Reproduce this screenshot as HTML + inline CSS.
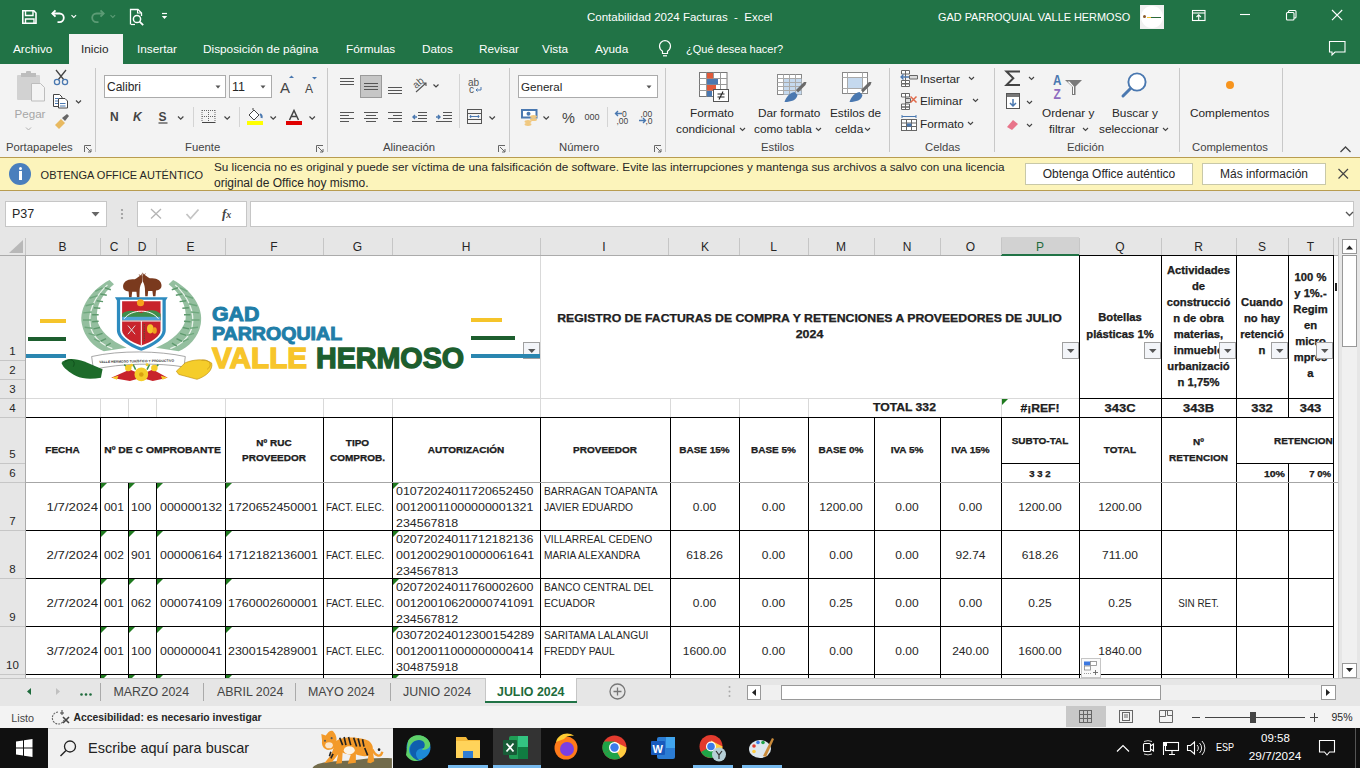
<!DOCTYPE html>
<html><head><meta charset="utf-8">
<style>
*{box-sizing:border-box;margin:0;padding:0}
html,body{width:1360px;height:768px;overflow:hidden;background:#fff}
body{position:relative;font-family:"Liberation Sans",sans-serif;color:#262626}
.a{position:absolute}
.t{position:absolute;white-space:nowrap;line-height:1}
svg{position:absolute;overflow:visible}
.tab{position:absolute;top:44px;font-size:11.8px;color:#fff;white-space:nowrap;line-height:1}
.sep{position:absolute;width:1px;background:#c8c8c8}
.gl{position:absolute;top:142px;font-size:11.3px;color:#444;white-space:nowrap;line-height:1}
.rt{position:absolute;font-size:12px;color:#262626;white-space:nowrap;line-height:1}
</style></head><body>
<!-- TITLE BAR -->
<div class="a" style="left:0;top:0;width:1360px;height:64px;background:#217346"></div>
<svg style="left:0;top:0" width="1360" height="64" fill="none" stroke="#fff" stroke-width="1.6">
 <!-- save -->
 <path d="M22.8 10.8h11l2.2 2.2v10.2h-13.2z" />
 <path d="M25.5 11v4.5h7.5V11" stroke-width="1.4"/>
 <path d="M25.5 23v-4h8.5v4" stroke-width="1.4"/>
 <!-- undo -->
 <path d="M52.5 13.5h7a4.3 4.3 0 0 1 0 8.6h-2" stroke-width="1.8"/>
 <path d="M55.5 10.3l-3.2 3.2 3.2 3.2" stroke-width="1.8"/>
 <path d="M71.5 15.2l2.3 2.3 2.3-2.3" stroke-width="1.1"/>
 <!-- redo faded -->
 <g stroke="#5c9b75">
 <path d="M103.5 13.5h-7a4.3 4.3 0 0 0 0 8.6h2" stroke-width="1.8"/>
 <path d="M100.5 10.3l3.2 3.2-3.2 3.2" stroke-width="1.8"/>
 <path d="M110.5 15.2l2.3 2.3 2.3-2.3" stroke-width="1.1"/>
 </g>
 <!-- print preview -->
 <path d="M130.5 24.5V9.5h7.5l3.5 3.5v3" stroke-width="1.3"/>
 <path d="M137.5 9.5v3.5h4" stroke-width="1.1"/>
 <circle cx="137" cy="19" r="3.6" stroke-width="1.5"/>
 <path d="M139.6 21.6l3.6 3.6" stroke-width="1.8"/>
 <path d="M131 24.5h4" stroke-width="1.2"/>
 <!-- customize -->
 <path d="M162 13.5h5" stroke-width="1.2"/>
 <path d="M161.8 16h5.4l-2.7 3z" fill="#fff" stroke="none"/>
 <!-- ribbon display -->
 <rect x="1192.5" y="10.5" width="12.5" height="10" stroke-width="1.1"/>
 <path d="M1192.5 13h12.5" stroke-width="1.1"/>
 <path d="M1198.7 20.5v-5.5M1196.5 17l2.2-2.2 2.2 2.2" stroke-width="1.1"/>
 <!-- minimize -->
 <path d="M1240 14.5h10" stroke-width="1.1"/>
 <!-- restore -->
 <rect x="1286.5" y="12.5" width="7.5" height="7.5" rx="1" stroke-width="1.1"/>
 <path d="M1288.5 12.5v-1a1 1 0 0 1 1-1h5.5a1 1 0 0 1 1 1v5.5a1 1 0 0 1-1 1h-1" stroke-width="1.1"/>
 <!-- close -->
 <path d="M1332 10l10.2 10.2M1342.2 10l-10.2 10.2" stroke-width="1.1"/>
 <!-- comment -->
 <path d="M1329.5 41.5h15.5v10.5h-10l-3 3v-3h-2.5z" stroke-width="1.1"/>
 <!-- lightbulb -->
 <path d="M662.5 53.5v-2.2c-1.8-1.2-3-3-3-5.2a5.5 5.5 0 0 1 11 0c0 2.2-1.2 4-3 5.2v2.2z" stroke-width="1.2"/>
 <path d="M663 55.8h4" stroke-width="1.2"/>
</svg>
<div class="t" style="left:587px;top:12px;font-size:11.5px;color:#fff">Contabilidad 2024 Facturas&nbsp; -&nbsp; Excel</div>
<div class="t" style="left:938px;top:12px;font-size:10.9px;color:#fff">GAD PARROQUIAL VALLE HERMOSO</div>
<div class="a" style="left:1140px;top:5px;width:24px;height:24px;background:#f0f0f0"></div>
<div class="a" style="left:1141px;top:6px;width:22px;height:22px;background:#fff;border-radius:50%"></div>
<div class="a" style="left:1143px;top:15px;width:3px;height:3px;background:#8a5a2a;border-radius:50%"></div>
<div class="a" style="left:1149px;top:17px;width:12px;height:1px;background:#2c6a3a"></div>
<div class="a" style="left:1147px;top:17px;width:4px;height:1px;background:#f4c430"></div>
<!-- tabs -->
<div class="a" style="left:69px;top:34px;width:54px;height:30px;background:#f3f3f3"></div>
<div class="tab" style="left:13px;">Archivo</div>
<div class="tab" style="left:81px;color:#262626">Inicio</div>
<div class="tab" style="left:137px;">Insertar</div>
<div class="tab" style="left:203px;">Disposición de página</div>
<div class="tab" style="left:346px;">Fórmulas</div>
<div class="tab" style="left:422px;">Datos</div>
<div class="tab" style="left:479px;">Revisar</div>
<div class="tab" style="left:542px;">Vista</div>
<div class="tab" style="left:595px;">Ayuda</div>
<div class="tab" style="left:686px;font-size:11px">¿Qué desea hacer?</div>

<!-- RIBBON -->
<div class="a" style="left:0;top:64px;width:1360px;height:93px;background:#f3f3f3"></div>
<div class="sep" style="left:95px;top:68px;height:84px"></div>
<div class="sep" style="left:327px;top:68px;height:84px"></div>
<div class="sep" style="left:509px;top:68px;height:84px"></div>
<div class="sep" style="left:665px;top:68px;height:84px"></div>
<div class="sep" style="left:889px;top:68px;height:84px"></div>
<div class="sep" style="left:994px;top:68px;height:84px"></div>
<div class="sep" style="left:1179px;top:68px;height:84px"></div>
<div class="sep" style="left:1282px;top:68px;height:84px"></div>
<div class="sep" style="left:193px;top:107px;height:20px;background:#d4d4d4"></div>
<div class="sep" style="left:239px;top:107px;height:20px;background:#d4d4d4"></div>
<div class="sep" style="left:459px;top:74px;height:54px;background:#d4d4d4"></div>
<div class="sep" style="left:607px;top:107px;height:20px;background:#d4d4d4"></div>
<!-- group labels -->
<div class="gl" style="left:6px">Portapapeles</div>
<div class="gl" style="left:185px">Fuente</div>
<div class="gl" style="left:383px">Alineación</div>
<div class="gl" style="left:559px">Número</div>
<div class="gl" style="left:761px">Estilos</div>
<div class="gl" style="left:925px">Celdas</div>
<div class="gl" style="left:1067px">Edición</div>
<div class="gl" style="left:1192px">Complementos</div>
<!-- clipboard text -->
<div class="rt" style="left:14.5px;top:108px;font-size:11.6px;color:#a6a6a6">Pegar</div>
<!-- font boxes -->
<div class="a" style="left:104px;top:75px;width:122px;height:23px;background:#fff;border:1px solid #ababab"></div>
<div class="rt" style="left:107px;top:81px;font-size:12px">Calibri</div>
<div class="a" style="left:229px;top:75px;width:43px;height:23px;background:#fff;border:1px solid #ababab"></div>
<div class="rt" style="left:232px;top:81px;font-size:12.5px">11</div>
<div class="a" style="left:518px;top:75px;width:140px;height:23px;background:#fff;border:1px solid #ababab"></div>
<div class="rt" style="left:521px;top:81px;font-size:11.6px">General</div>
<!-- Estilos text -->
<div class="rt" style="left:690px;top:107.5px;font-size:11.8px">Formato</div>
<div class="rt" style="left:676px;top:123.5px;font-size:11.8px">condicional</div>
<div class="rt" style="left:758px;top:107.5px;font-size:11.8px">Dar formato</div>
<div class="rt" style="left:754px;top:123.5px;font-size:11.8px">como tabla</div>
<div class="rt" style="left:830px;top:107.5px;font-size:11.8px">Estilos de</div>
<div class="rt" style="left:835px;top:123.5px;font-size:11.8px">celda</div>
<div class="rt" style="left:920px;top:74px;font-size:11.8px">Insertar</div>
<div class="rt" style="left:920px;top:96px;font-size:11.8px">Eliminar</div>
<div class="rt" style="left:920px;top:119px;font-size:11.8px">Formato</div>
<div class="rt" style="left:1042px;top:107.5px;font-size:11.8px">Ordenar y</div>
<div class="rt" style="left:1049px;top:123.5px;font-size:11.8px">filtrar</div>
<div class="rt" style="left:1112px;top:107.5px;font-size:11.8px">Buscar y</div>
<div class="rt" style="left:1099px;top:123.5px;font-size:11.8px">seleccionar</div>
<div class="rt" style="left:1190px;top:107.5px;font-size:11.8px">Complementos</div>
<svg style="left:0;top:0" width="1360" height="160" fill="none" stroke="#444" stroke-width="1">
 <!-- paste -->
 <rect x="17" y="75" width="23" height="25" rx="1" fill="#d2d2d2" stroke="none"/>
 <rect x="21" y="73" width="15" height="4" fill="#bdbdbd" stroke="none"/><rect x="26" y="71" width="5" height="3" rx="1" fill="#bdbdbd" stroke="none"/>
 <path d="M31.5 83.5h9l4 4v13.5h-13z" fill="#f4f4f4" stroke="#bdbdbd"/>
 <path d="M26 127.5l2.5 2.5 2.5-2.5" stroke="#b0b0b0"/>
 <!-- scissors -->
 <path d="M56 70l8 10M66 70l-8 10" stroke="#444" stroke-width="1.3"/>
 <circle cx="57" cy="82" r="2.6" stroke="#4a78b0" stroke-width="1.3"/>
 <circle cx="65" cy="82" r="2.6" stroke="#4a78b0" stroke-width="1.3"/>
 <!-- copy -->
 <path d="M53.5 94.5h6l2.5 2.5v9.5h-8.5z" fill="#fff" stroke="#444"/>
 <path d="M58.5 98.5h6.5l2.5 2.5v7h-9z" fill="#fff" stroke="#444"/>
 <path d="M55 98.5h3.5M55 101h3M55 103.5h3M60 103.5h5.5M60 106h5.5" stroke="#4a78b0"/>
 <path d="M76 100.5l2.5 2.5 2.5-2.5" stroke-width="1.2"/>
 <!-- brush -->
 <path d="M55 125l6-6 4 4-6 6z" fill="#e8b960" stroke="none"/>
 <path d="M62 118l5-4 2 2-4 5z" fill="#666" stroke="none"/>
 <!-- launcher icons -->
 <g stroke="#666">
 <path d="M84.5 152v-6.5h6.5M86 147l5 5M91 149v3h-3"/>
 <path d="M316.5 152v-6.5h6.5M318 147l5 5M323 149v3h-3"/>
 <path d="M498.5 152v-6.5h6.5M500 147l5 5M505 149v3h-3"/>
 <path d="M654.5 152v-6.5h6.5M656 147l5 5M661 149v3h-3"/>
 </g>
 <!-- dropdown arrows in boxes -->
 <path d="M215.5 85.5h5l-2.5 3z" fill="#555" stroke="none"/>
 <path d="M260.5 85.5h5l-2.5 3z" fill="#555" stroke="none"/>
 <path d="M646.5 85.5h5l-2.5 3z" fill="#555" stroke="none"/>
 <!-- grow/shrink font -->
 <text x="280" y="93" font-family="Liberation Sans" font-size="15" fill="#444" stroke="none">A</text>
 <path d="M289 78l2.5-2.5 2.5 2.5z" fill="#4a78b0" stroke="none"/>
 <text x="305" y="93" font-family="Liberation Sans" font-size="12" fill="#444" stroke="none">A</text>
 <path d="M312 77h5l-2.5 2.5z" fill="#4a78b0" stroke="none"/>
 <!-- N K S -->
 <text x="110" y="121" font-family="Liberation Sans" font-weight="bold" font-size="12" fill="#444" stroke="none">N</text>
 <text x="133" y="121" font-family="Liberation Sans" font-weight="bold" font-style="italic" font-size="12" fill="#444" stroke="none">K</text>
 <text x="158.5" y="121" font-family="Liberation Sans" font-weight="bold" font-size="12" fill="#444" stroke="none">S</text>
 <path d="M158.5 123h9" stroke-width="1.2"/>
 <path d="M178 116.5l2.7 2.7 2.7-2.7" stroke-width="1.2"/>
 <!-- borders -->
 <path d="M202 110.5h13M202 116.5h13M202 110v12M208.5 110v12M215 110v12" stroke="#666" stroke-dasharray="1 1"/>
 <path d="M202 122.5h13.5" stroke="#444"/>
 <path d="M224.5 116.5l2.7 2.7 2.7-2.7" stroke-width="1.2"/>
 <!-- fill -->
 <rect x="247" y="121" width="16" height="4" fill="#ffff00" stroke="none"/>
 <path d="M249 115l5-5 5 5-5 5z" fill="#fff" stroke="#444"/>
 <path d="M253 110v-2" stroke="#444"/>
 <path d="M260 114c1.5 1 2 2.5 1.5 4" stroke="#4a78b0" stroke-width="2"/>
 <path d="M270.5 116.5l2.7 2.7 2.7-2.7" stroke-width="1.2"/>
 <!-- font color -->
 <rect x="286" y="121" width="16" height="4" fill="#e00000" stroke="none"/>
 <path d="M289.5 120l4.5-9.5 4.5 9.5M291 116.5h6" stroke-width="1.5"/>
 <path d="M309.5 116.5l2.7 2.7 2.7-2.7" stroke-width="1.2"/>
 <!-- alignment top row -->
 <path d="M340 78.5h14M340 81.5h14M340 84.5h14" stroke="#555"/>
 <rect x="360.5" y="75.5" width="21" height="22" fill="#c6c6c6" stroke="#9a9a9a"/>
 <path d="M364 83.5h14M364 86.5h14M364 89.5h14" stroke="#555"/>
 <path d="M388 87.5h14M388 90.5h14M388 93.5h14" stroke="#555"/>
 <text x="412" y="86" font-family="Liberation Sans" font-size="10" fill="#555" stroke="none" transform="rotate(-40 418 82)">ab</text>
 <path d="M416 92l10-9M423 83h3v3" stroke="#555" stroke-width="1.1"/>
 <path d="M433.5 84.5l2.5 2.5 2.5-2.5" stroke-width="1.2"/>
 <text x="468" y="86" font-family="Liberation Sans" font-size="10" fill="#555" stroke="none">ab</text>
 <text x="469" y="93" font-family="Liberation Sans" font-size="10" fill="#555" stroke="none">c</text>
 <path d="M481 87v3h-5M477.5 88.5l-1.5 1.5 1.5 1.5" stroke="#4a78b0"/>
 <!-- alignment bottom row -->
 <path d="M340 112.5h14M340 115.5h9M340 118.5h14M340 121.5h9" stroke="#555"/>
 <path d="M364 112.5h14M366 115.5h10M364 118.5h14M366 121.5h10" stroke="#555"/>
 <path d="M388 112.5h14M393 115.5h9M388 118.5h14M393 121.5h9" stroke="#555"/>
 <path d="M418 112.5h9M418 115.5h9M418 118.5h9M412 121.5h15" stroke="#555"/>
 <path d="M413 117h4M415 115l-2 2 2 2" stroke="#4a78b0" stroke-width="1.4"/>
 <path d="M443 112.5h9M443 115.5h9M443 118.5h9M436 121.5h16" stroke="#555"/>
 <path d="M436 117h4M438 115l2 2-2 2" stroke="#4a78b0" stroke-width="1.4"/>
 <!-- merge -->
 <rect x="467.5" y="109.5" width="14" height="14" stroke="#555"/>
 <path d="M467.5 113.5h14M467.5 119.5h14" stroke="#555"/>
 <path d="M470 116.5h9M471 115l-1 1.5 1 1.5M478 115l1 1.5-1 1.5" stroke="#4a78b0"/>
 <path d="M489.5 116.5l2.7 2.7 2.7-2.7" stroke-width="1.2"/>
 <!-- number -->
 <rect x="522" y="110" width="14.5" height="7.5" fill="#fff" stroke="#4a78b0" stroke-width="2"/>
 <circle cx="528.5" cy="113.8" r="2" fill="#4a78b0" stroke="none"/>
 <ellipse cx="533.5" cy="116.5" rx="3.5" ry="1.6" fill="#f0c880" stroke="none"/>
 <ellipse cx="533.5" cy="119.5" rx="3.5" ry="1.6" fill="#f0c880" stroke="none"/>
 <ellipse cx="528" cy="121.5" rx="3.5" ry="1.6" fill="#f0c880" stroke="none"/>
 <ellipse cx="528" cy="124.3" rx="3.5" ry="1.6" fill="#f0c880" stroke="none"/>
 <path d="M543.5 116.5l2.7 2.7 2.7-2.7" stroke-width="1.2"/>
 <text x="562" y="122.5" font-family="Liberation Sans" font-size="14.5" fill="#444" stroke="none">%</text>
 <text x="584.5" y="120.5" font-family="Liberation Sans" font-size="9.5" fill="#444" stroke="none" transform="translate(584.5 0) scale(0.95 1) translate(-584.5 0)">000</text>
 <text x="622" y="116.5" font-family="Liberation Sans" font-size="8.5" fill="#444" stroke="none">0</text>
 <text x="616.5" y="123.5" font-family="Liberation Sans" font-size="8.5" fill="#444" stroke="none">,00</text>
 <path d="M615.5 113.5h6.5M618 111l-2.5 2.5 2.5 2.5" stroke="#4a78b0" stroke-width="1.4"/>
 <text x="640.5" y="116.5" font-family="Liberation Sans" font-size="8.5" fill="#444" stroke="none">,00</text>
 <text x="645.5" y="123.5" font-family="Liberation Sans" font-size="8.5" fill="#444" stroke="none">,0</text>
 <path d="M639 120.5h6.5M643 118l2.5 2.5-2.5 2.5" stroke="#4a78b0" stroke-width="1.4"/>
 <!-- conditional format icon -->
 <rect x="699.5" y="72.5" width="27.5" height="24" fill="#fff" stroke="#777"/>
 <path d="M699.5 78.5h27.5M699.5 84.5h27.5M699.5 90.5h27.5M706.5 72.5v24M713.5 72.5v24M720.5 72.5v24" stroke="#999" fill="none"/>
 <rect x="707" y="73" width="6" height="5.5" fill="#e05a3a" stroke="none"/>
 <rect x="707" y="79" width="11" height="5.5" fill="#4a78b0" stroke="none"/>
 <rect x="707" y="85" width="9" height="5.5" fill="#e05a3a" stroke="none"/>
 <rect x="707" y="91" width="5" height="5.5" fill="#4a78b0" stroke="none"/>
 <rect x="713.5" y="89.5" width="15" height="12" fill="#fff" stroke="#555"/>
 <path d="M717.5 94h7M717.5 97h7M719 99.5l4-8" stroke="#222" stroke-width="1.1"/>
 <path d="M740 128l2.5 2.5 2.5-2.5" stroke-width="1.1"/>
 <!-- table format -->
 <rect x="777.5" y="74.5" width="24" height="20" fill="#fff" stroke="#888"/>
 <rect x="784" y="79" width="17.5" height="15.5" fill="#c5d9ee" stroke="none"/>
 <path d="M777.5 78.5h24M777.5 82.5h24M777.5 86.5h24M777.5 90.5h24M783.5 74.5v20M789.5 74.5v20M795.5 74.5v20" stroke="#aaa" fill="none"/>
 <path d="M796 90l8-8 2.5 0 -1 3 -7.5 7.5z" fill="#6a6a6a" stroke="none"/>
 <path d="M784.5 102c1.5-5 5-9 10-10l3 3c-1 5-6 7-13 7z" fill="#4a78b0" stroke="none"/>
 <path d="M816 128l2.5 2.5 2.5-2.5" stroke-width="1.1"/>
 <!-- cell styles -->
 <rect x="842.5" y="72.5" width="25" height="21" fill="#fff" stroke="#888"/>
 <path d="M842.5 77.5h25M842.5 88.5h25M847.5 72.5v21M862.5 72.5v21" stroke="#aaa" fill="none"/>
 <rect x="848" y="78" width="14" height="10" fill="#c5d9ee" stroke="none"/>
 <path d="M861 90l8-8 2.5 0 -1 3 -7.5 7.5z" fill="#6a6a6a" stroke="none"/>
 <path d="M849.5 102c1.5-5 5-9 10-10l3 3c-1 5-6 7-13 7z" fill="#4a78b0" stroke="none"/>
 <path d="M865 128l2.5 2.5 2.5-2.5" stroke-width="1.1"/>
 <!-- cells icons -->
 <g stroke="#666" fill="#fff">
 <path d="M901.5 70.5h8v3.5h-8zM901.5 80.5h8v3h-8zM901.5 84h8v2.5h-8z"/>
 <path d="M905.5 70.5v16"/>
 <path d="M909.5 75.5h8v3.5h-8z" fill="#ddd"/>
 <path d="M901.5 93.5h8v3.5h-8zM901.5 104h8v3h-8zM901.5 107h8v2.5h-8z"/>
 <path d="M905.5 93.5v16"/>
 <path d="M905.5 98.5h5v4h-5z" fill="#ddd"/>
 <rect x="901.5" y="119.5" width="15" height="11"/>
 <path d="M901.5 123h15M901.5 126.5h15M906.5 119.5v11M911.5 119.5v11"/>
 </g>
 <path d="M909 77h-8M903.5 74.5l-2.5 2.5 2.5 2.5" stroke="#4a78b0" stroke-width="1.3" fill="none"/>
 <path d="M910.5 96.5l6 6M916.5 96.5l-6 6" stroke="#e06a4a" stroke-width="1.5"/>
 <rect x="907" y="123.5" width="4.5" height="3" fill="#4a78b0" stroke="none"/>
 <path d="M902 116.5h14M902 115v3M916 115v3" stroke="#4a78b0" stroke-width="1"/>
 <path d="M969 77l2.5 2.5 2.5-2.5" stroke-width="1.1"/>
 <path d="M973 99l2.5 2.5 2.5-2.5" stroke-width="1.1"/>
 <path d="M968 122l2.5 2.5 2.5-2.5" stroke-width="1.1"/>
 <!-- edit icons -->
 <path d="M1020 71.5h-13.5l6.8 6.8-6.8 6.8h13.5" stroke="#444" stroke-width="2"/>
 <path d="M1029 77l2.5 2.5 2.5-2.5" stroke-width="1.1"/>
 <rect x="1006.5" y="93.5" width="13" height="15" fill="#fff" stroke="#555"/>
 <rect x="1007" y="94" width="12" height="3" fill="#777" stroke="none"/>
 <path d="M1013 99v7M1010 103l3 3 3-3" stroke="#4a78b0" stroke-width="1.5"/>
 <path d="M1027 101l2.5 2.5 2.5-2.5" stroke-width="1.1"/>
 <path d="M1007 127l6-7 5 4-6 6z" fill="#e8748a" stroke="none"/>
 <path d="M1027 124l2.5 2.5 2.5-2.5" stroke-width="1.1"/>
 <!-- sort -->
 <text x="1053" y="85" font-family="Liberation Sans" font-weight="bold" font-size="15" fill="#4a78b0" stroke="none" transform="translate(1053 0) scale(0.78 1) translate(-1053 0)">A</text>
 <text x="1053.5" y="99" font-family="Liberation Sans" font-weight="bold" font-size="15" fill="#8e6bbf" stroke="none" transform="translate(1053.5 0) scale(0.8 1) translate(-1053.5 0)">Z</text>
 <path d="M1065 80h17l-6.5 6.5v8.5h-3.5v-8.5z" fill="#7a7a7a" stroke="none"/>
 <path d="M1067.5 81.5l5.5 5.5v7h1v-7.5l-4.5-5z" fill="#fff" stroke="none"/>
 <path d="M1083 128l2.5 2.5 2.5-2.5" stroke-width="1.1"/>
 <!-- find -->
 <circle cx="1137" cy="82" r="8.6" stroke="#4a78b0" stroke-width="1.9" fill="#fff"/>
 <path d="M1130.5 88.5l-7.5 7.5" stroke="#4a78b0" stroke-width="3" stroke-linecap="round"/>
 <path d="M1163 128l2.5 2.5 2.5-2.5" stroke-width="1.1"/>
 <!-- addins dot -->
 <circle cx="1230" cy="85" r="4" fill="#f7941d" stroke="none"/>
 <!-- collapse -->
 <path d="M1340.5 152l5-5 5 5" stroke="#444" stroke-width="1.3"/>
</svg>

<!-- YELLOW BAR -->
<div class="a" style="left:0;top:157px;width:1360px;height:34px;background:#fcf4bb;border-top:1px solid #b89c50;border-bottom:1px solid #b89c50"></div>
<div class="a" style="left:9px;top:163px;width:22px;height:22px;border-radius:50%;background:#4a7fbd"></div>
<div class="a" style="left:18.5px;top:167px;width:3px;height:3px;background:#fff;border-radius:50%"></div>
<div class="a" style="left:18.5px;top:171px;width:3px;height:9px;background:#fff"></div>
<div class="t" style="left:40.6px;top:169.7px;font-size:11px;color:#262626">OBTENGA OFFICE AUTÉNTICO</div>
<div class="t" style="left:214px;top:161px;font-size:11.74px;color:#262626">Su licencia no es original y puede ser víctima de una falsificación de software. Evite las interrupciones y mantenga sus archivos a salvo con una licencia</div>
<div class="t" style="left:214px;top:177px;font-size:12px;color:#262626">original de Office hoy mismo.</div>
<div class="a" style="left:1025px;top:163px;width:168px;height:22px;background:#fff;border:1px solid #c8c8a8"></div>
<div class="t" style="left:1025px;top:168px;width:168px;text-align:center;font-size:12px;color:#262626">Obtenga Office auténtico</div>
<div class="a" style="left:1202px;top:163px;width:124px;height:22px;background:#fff;border:1px solid #c8c8a8"></div>
<div class="t" style="left:1202px;top:168px;width:124px;text-align:center;font-size:12px;color:#262626">Más información</div>
<svg style="left:0;top:0" width="1360" height="200"><path d="M1338.5 169l9.5 9.5M1348 169l-9.5 9.5" stroke="#444" stroke-width="1.2"/></svg>
<!-- FORMULA BAR -->
<div class="a" style="left:0;top:191px;width:1360px;height:65px;background:#e6e6e6"></div>
<div class="a" style="left:5px;top:201px;width:102px;height:26px;background:#fff;border:1px solid #c6c6c6"></div>
<div class="t" style="left:12px;top:207.5px;font-size:12.5px;color:#262626">P37</div>

<div class="a" style="left:137px;top:201px;width:110px;height:26px;background:#fff;border:1px solid #c6c6c6"></div>
<div class="t" style="left:222px;top:207px;font-size:13px;font-family:'Liberation Serif',serif;font-style:italic;font-weight:bold;color:#444">f<span style="font-size:10px">x</span></div>
<div class="a" style="left:250px;top:201px;width:1104px;height:26px;background:#fff;border:1px solid #c6c6c6"></div>
<svg style="left:0;top:0" width="1360" height="260">
 <path d="M91.5 212h8l-4 4.5z" fill="#666"/>
 <circle cx="122" cy="210" r="1.1" fill="#999"/><circle cx="122" cy="214" r="1.1" fill="#999"/><circle cx="122" cy="218" r="1.1" fill="#999"/>
 <path d="M151 209l10 9.5M161 209l-10 9.5" stroke="#b4b4b4" stroke-width="1.3" fill="none"/>
 <path d="M186.5 214l4 4.5 8-9" stroke="#c4c4c4" stroke-width="1.8" fill="none"/>
 <path d="M1346 212l3.5 3.5 3.5-3.5" stroke="#555" stroke-width="1.3" fill="none"/>
</svg>
<!-- COLUMN HEADERS -->
<div class="a" style="left:0;top:237px;width:1338px;height:19px;background:#e6e6e6;border-bottom:1px solid #ababab"></div>
<svg style="left:0;top:0" width="30" height="260"><path d="M9 253h14v-13z" fill="#b8b8b8"/></svg>
<div class="a" style="left:1001px;top:237px;width:78px;height:18px;background:#d2d2d2"></div>
<div class="a" style="left:1001px;top:254px;width:78px;height:2px;background:#217346"></div>

<div class="a" style="left:100px;top:238px;width:1px;height:17px;background:#c6c6c6"></div>
<div class="t" style="left:25px;top:241px;width:75px;text-align:center;font-size:12px;color:#262626">B</div>
<div class="a" style="left:128px;top:238px;width:1px;height:17px;background:#c6c6c6"></div>
<div class="t" style="left:100px;top:241px;width:28px;text-align:center;font-size:12px;color:#262626">C</div>
<div class="a" style="left:156px;top:238px;width:1px;height:17px;background:#c6c6c6"></div>
<div class="t" style="left:128px;top:241px;width:28px;text-align:center;font-size:12px;color:#262626">D</div>
<div class="a" style="left:225px;top:238px;width:1px;height:17px;background:#c6c6c6"></div>
<div class="t" style="left:156px;top:241px;width:69px;text-align:center;font-size:12px;color:#262626">E</div>
<div class="a" style="left:323px;top:238px;width:1px;height:17px;background:#c6c6c6"></div>
<div class="t" style="left:225px;top:241px;width:98px;text-align:center;font-size:12px;color:#262626">F</div>
<div class="a" style="left:392px;top:238px;width:1px;height:17px;background:#c6c6c6"></div>
<div class="t" style="left:323px;top:241px;width:69px;text-align:center;font-size:12px;color:#262626">G</div>
<div class="a" style="left:540px;top:238px;width:1px;height:17px;background:#c6c6c6"></div>
<div class="t" style="left:392px;top:241px;width:148px;text-align:center;font-size:12px;color:#262626">H</div>
<div class="a" style="left:668px;top:238px;width:1px;height:17px;background:#c6c6c6"></div>
<div class="t" style="left:540px;top:241px;width:128px;text-align:center;font-size:12px;color:#262626">I</div>
<div class="a" style="left:739px;top:238px;width:1px;height:17px;background:#c6c6c6"></div>
<div class="t" style="left:671px;top:241px;width:68px;text-align:center;font-size:12px;color:#262626">K</div>
<div class="a" style="left:808px;top:238px;width:1px;height:17px;background:#c6c6c6"></div>
<div class="t" style="left:739px;top:241px;width:69px;text-align:center;font-size:12px;color:#262626">L</div>
<div class="a" style="left:874px;top:238px;width:1px;height:17px;background:#c6c6c6"></div>
<div class="t" style="left:808px;top:241px;width:66px;text-align:center;font-size:12px;color:#262626">M</div>
<div class="a" style="left:940px;top:238px;width:1px;height:17px;background:#c6c6c6"></div>
<div class="t" style="left:874px;top:241px;width:66px;text-align:center;font-size:12px;color:#262626">N</div>
<div class="a" style="left:1001px;top:238px;width:1px;height:17px;background:#c6c6c6"></div>
<div class="t" style="left:940px;top:241px;width:61px;text-align:center;font-size:12px;color:#262626">O</div>
<div class="a" style="left:1079px;top:238px;width:1px;height:17px;background:#c6c6c6"></div>
<div class="t" style="left:1001px;top:241px;width:78px;text-align:center;font-size:12px;color:#1e6b3c">P</div>
<div class="a" style="left:1161px;top:238px;width:1px;height:17px;background:#c6c6c6"></div>
<div class="t" style="left:1079px;top:241px;width:82px;text-align:center;font-size:12px;color:#262626">Q</div>
<div class="a" style="left:1236px;top:238px;width:1px;height:17px;background:#c6c6c6"></div>
<div class="t" style="left:1161px;top:241px;width:75px;text-align:center;font-size:12px;color:#262626">R</div>
<div class="a" style="left:1288px;top:238px;width:1px;height:17px;background:#c6c6c6"></div>
<div class="t" style="left:1236px;top:241px;width:52px;text-align:center;font-size:12px;color:#262626">S</div>
<div class="a" style="left:1333px;top:238px;width:1px;height:17px;background:#c6c6c6"></div>
<div class="t" style="left:1288px;top:241px;width:45px;text-align:center;font-size:12px;color:#262626">T</div>
<div class="a" style="left:668px;top:238px;width:1px;height:17px;background:#c6c6c6"></div>
<div class="a" style="left:25px;top:238px;width:1px;height:17px;background:#c6c6c6"></div>
<div class="a" style="left:0;top:256px;width:25px;height:422px;background:#e6e6e6"></div>
<div class="a" style="left:25px;top:256px;width:1px;height:422px;background:#ababab"></div>
<div class="a" style="left:0;top:360px;width:25px;height:1px;background:#c6c6c6"></div>
<div class="t" style="left:0;top:346.3px;width:25px;text-align:center;font-size:11.5px;color:#262626">1</div>
<div class="a" style="left:0;top:379px;width:25px;height:1px;background:#c6c6c6"></div>
<div class="t" style="left:0;top:365.3px;width:25px;text-align:center;font-size:11.5px;color:#262626">2</div>
<div class="a" style="left:0;top:398px;width:25px;height:1px;background:#c6c6c6"></div>
<div class="t" style="left:0;top:384.3px;width:25px;text-align:center;font-size:11.5px;color:#262626">3</div>
<div class="a" style="left:0;top:417px;width:25px;height:1px;background:#c6c6c6"></div>
<div class="t" style="left:0;top:403.3px;width:25px;text-align:center;font-size:11.5px;color:#262626">4</div>
<div class="a" style="left:0;top:463px;width:25px;height:1px;background:#c6c6c6"></div>
<div class="t" style="left:0;top:449.3px;width:25px;text-align:center;font-size:11.5px;color:#262626">5</div>
<div class="a" style="left:0;top:482px;width:25px;height:1px;background:#c6c6c6"></div>
<div class="t" style="left:0;top:468.3px;width:25px;text-align:center;font-size:11.5px;color:#262626">6</div>
<div class="a" style="left:0;top:530px;width:25px;height:1px;background:#c6c6c6"></div>
<div class="t" style="left:0;top:516.3px;width:25px;text-align:center;font-size:11.5px;color:#262626">7</div>
<div class="a" style="left:0;top:578px;width:25px;height:1px;background:#c6c6c6"></div>
<div class="t" style="left:0;top:564.3px;width:25px;text-align:center;font-size:11.5px;color:#262626">8</div>
<div class="a" style="left:0;top:626px;width:25px;height:1px;background:#c6c6c6"></div>
<div class="t" style="left:0;top:612.3px;width:25px;text-align:center;font-size:11.5px;color:#262626">9</div>
<div class="a" style="left:0;top:674px;width:25px;height:1px;background:#c6c6c6"></div>
<div class="t" style="left:0;top:660.3px;width:25px;text-align:center;font-size:11.5px;color:#262626">10</div>
<div class="a" style="left:26px;top:256px;width:1312px;height:422px;background:#fff"></div>
<div class="a" style="left:26px;top:398px;width:1053px;height:1px;background:#d9d9d9"></div>
<div class="a" style="left:100px;top:399px;width:1px;height:18px;background:#d9d9d9"></div>
<div class="a" style="left:128px;top:399px;width:1px;height:18px;background:#d9d9d9"></div>
<div class="a" style="left:156px;top:399px;width:1px;height:18px;background:#d9d9d9"></div>
<div class="a" style="left:225px;top:399px;width:1px;height:18px;background:#d9d9d9"></div>
<div class="a" style="left:323px;top:399px;width:1px;height:18px;background:#d9d9d9"></div>
<div class="a" style="left:392px;top:399px;width:1px;height:18px;background:#d9d9d9"></div>
<div class="a" style="left:540px;top:399px;width:1px;height:18px;background:#d9d9d9"></div>
<div class="a" style="left:670px;top:399px;width:1px;height:18px;background:#d9d9d9"></div>
<div class="a" style="left:739px;top:399px;width:1px;height:18px;background:#d9d9d9"></div>
<div class="a" style="left:808px;top:399px;width:1px;height:18px;background:#d9d9d9"></div>
<div class="a" style="left:1001px;top:399px;width:1px;height:18px;background:#d9d9d9"></div>
<div class="a" style="left:540px;top:256px;width:1px;height:142px;background:#d9d9d9"></div>
<div class="a" style="left:1079px;top:256px;width:1px;height:419px;background:#000"></div>
<div class="a" style="left:1161px;top:256px;width:1px;height:419px;background:#000"></div>
<div class="a" style="left:1236px;top:256px;width:1px;height:419px;background:#000"></div>
<div class="a" style="left:1288px;top:256px;width:1px;height:419px;background:#000"></div>
<div class="a" style="left:1333px;top:256px;width:1px;height:419px;background:#000"></div>
<div class="a" style="left:1079px;top:398px;width:255px;height:1px;background:#000"></div>
<div class="a" style="left:1079px;top:255px;width:255px;height:1px;background:#000"></div>
<div class="a" style="left:26px;top:417px;width:1308px;height:1px;background:#000"></div>
<div class="a" style="left:100px;top:417px;width:1px;height:258px;background:#000"></div>
<div class="a" style="left:225px;top:417px;width:1px;height:258px;background:#000"></div>
<div class="a" style="left:323px;top:417px;width:1px;height:258px;background:#000"></div>
<div class="a" style="left:392px;top:417px;width:1px;height:258px;background:#000"></div>
<div class="a" style="left:540px;top:417px;width:1px;height:258px;background:#000"></div>
<div class="a" style="left:670px;top:417px;width:1px;height:258px;background:#000"></div>
<div class="a" style="left:739px;top:417px;width:1px;height:258px;background:#000"></div>
<div class="a" style="left:808px;top:417px;width:1px;height:258px;background:#000"></div>
<div class="a" style="left:874px;top:417px;width:1px;height:258px;background:#000"></div>
<div class="a" style="left:940px;top:417px;width:1px;height:258px;background:#000"></div>
<div class="a" style="left:1001px;top:417px;width:1px;height:258px;background:#000"></div>
<div class="a" style="left:1001px;top:463px;width:78px;height:1px;background:#000"></div>
<div class="a" style="left:1236px;top:463px;width:98px;height:1px;background:#000"></div>
<div class="a" style="left:128px;top:482px;width:1px;height:196px;background:#000"></div>
<div class="a" style="left:156px;top:482px;width:1px;height:196px;background:#000"></div>
<div class="a" style="left:1288px;top:418px;width:1px;height:45px;background:#fff"></div>
<div class="a" style="left:26px;top:482px;width:1312px;height:1px;background:#a6a6a6"></div>
<div class="a" style="left:26px;top:530px;width:1308px;height:1px;background:#000"></div>
<div class="a" style="left:26px;top:578px;width:1308px;height:1px;background:#000"></div>
<div class="a" style="left:26px;top:626px;width:1308px;height:1px;background:#000"></div>
<div class="a" style="left:26px;top:674px;width:1308px;height:1px;background:#000"></div>
<div class="a" style="left:100px;top:675px;width:1px;height:3px;background:#000"></div>
<div class="a" style="left:128px;top:675px;width:1px;height:3px;background:#000"></div>
<div class="a" style="left:156px;top:675px;width:1px;height:3px;background:#000"></div>
<div class="a" style="left:225px;top:675px;width:1px;height:3px;background:#000"></div>
<div class="a" style="left:323px;top:675px;width:1px;height:3px;background:#000"></div>
<div class="a" style="left:392px;top:675px;width:1px;height:3px;background:#000"></div>
<div class="a" style="left:540px;top:675px;width:1px;height:3px;background:#000"></div>
<div class="a" style="left:670px;top:675px;width:1px;height:3px;background:#000"></div>
<div class="a" style="left:739px;top:675px;width:1px;height:3px;background:#000"></div>
<div class="a" style="left:808px;top:675px;width:1px;height:3px;background:#000"></div>
<div class="a" style="left:874px;top:675px;width:1px;height:3px;background:#000"></div>
<div class="a" style="left:940px;top:675px;width:1px;height:3px;background:#000"></div>
<div class="a" style="left:1001px;top:675px;width:1px;height:3px;background:#000"></div>
<div class="a" style="left:1079px;top:675px;width:1px;height:3px;background:#000"></div>
<div class="a" style="left:1161px;top:675px;width:1px;height:3px;background:#000"></div>
<div class="a" style="left:1236px;top:675px;width:1px;height:3px;background:#000"></div>
<div class="a" style="left:1288px;top:675px;width:1px;height:3px;background:#000"></div>
<div class="a" style="left:1333px;top:675px;width:1px;height:3px;background:#000"></div>
<svg style="left:101px;top:483px" width="6" height="6"><path d="M0 0h6L0 6z" fill="#1f7a1f"/></svg>
<svg style="left:129px;top:483px" width="6" height="6"><path d="M0 0h6L0 6z" fill="#1f7a1f"/></svg>
<svg style="left:157px;top:483px" width="6" height="6"><path d="M0 0h6L0 6z" fill="#1f7a1f"/></svg>
<svg style="left:226px;top:483px" width="6" height="6"><path d="M0 0h6L0 6z" fill="#1f7a1f"/></svg>
<svg style="left:393px;top:483px" width="6" height="6"><path d="M0 0h6L0 6z" fill="#1f7a1f"/></svg>
<svg style="left:101px;top:531px" width="6" height="6"><path d="M0 0h6L0 6z" fill="#1f7a1f"/></svg>
<svg style="left:129px;top:531px" width="6" height="6"><path d="M0 0h6L0 6z" fill="#1f7a1f"/></svg>
<svg style="left:157px;top:531px" width="6" height="6"><path d="M0 0h6L0 6z" fill="#1f7a1f"/></svg>
<svg style="left:226px;top:531px" width="6" height="6"><path d="M0 0h6L0 6z" fill="#1f7a1f"/></svg>
<svg style="left:393px;top:531px" width="6" height="6"><path d="M0 0h6L0 6z" fill="#1f7a1f"/></svg>
<svg style="left:101px;top:579px" width="6" height="6"><path d="M0 0h6L0 6z" fill="#1f7a1f"/></svg>
<svg style="left:129px;top:579px" width="6" height="6"><path d="M0 0h6L0 6z" fill="#1f7a1f"/></svg>
<svg style="left:157px;top:579px" width="6" height="6"><path d="M0 0h6L0 6z" fill="#1f7a1f"/></svg>
<svg style="left:226px;top:579px" width="6" height="6"><path d="M0 0h6L0 6z" fill="#1f7a1f"/></svg>
<svg style="left:393px;top:579px" width="6" height="6"><path d="M0 0h6L0 6z" fill="#1f7a1f"/></svg>
<svg style="left:101px;top:627px" width="6" height="6"><path d="M0 0h6L0 6z" fill="#1f7a1f"/></svg>
<svg style="left:129px;top:627px" width="6" height="6"><path d="M0 0h6L0 6z" fill="#1f7a1f"/></svg>
<svg style="left:157px;top:627px" width="6" height="6"><path d="M0 0h6L0 6z" fill="#1f7a1f"/></svg>
<svg style="left:226px;top:627px" width="6" height="6"><path d="M0 0h6L0 6z" fill="#1f7a1f"/></svg>
<svg style="left:393px;top:627px" width="6" height="6"><path d="M0 0h6L0 6z" fill="#1f7a1f"/></svg>
<svg style="left:101px;top:675px" width="6" height="6"><path d="M0 0h6L0 6z" fill="#1f7a1f"/></svg>
<svg style="left:129px;top:675px" width="6" height="6"><path d="M0 0h6L0 6z" fill="#1f7a1f"/></svg>
<svg style="left:157px;top:675px" width="6" height="6"><path d="M0 0h6L0 6z" fill="#1f7a1f"/></svg>
<svg style="left:226px;top:675px" width="6" height="6"><path d="M0 0h6L0 6z" fill="#1f7a1f"/></svg>
<svg style="left:393px;top:675px" width="6" height="6"><path d="M0 0h6L0 6z" fill="#1f7a1f"/></svg>
<svg style="left:1002px;top:399px" width="6" height="6"><path d="M0 0h6L0 6z" fill="#1f7a1f"/></svg>
<div class="a" style="left:1335px;top:283px;width:2px;height:8px;background:#222"></div>
<!-- LOGO -->
<svg style="left:0;top:0" width="560" height="400">
 <rect x="40" y="319" width="26" height="4" fill="#f5c42a"/>
 <rect x="28" y="337" width="38" height="4" fill="#1d5e2e"/>
 <rect x="26" y="354" width="40" height="4" fill="#2a86b0"/>
 <rect x="471" y="318" width="31" height="4" fill="#f5c42a"/>
 <rect x="471" y="336" width="44" height="4" fill="#1d5e2e"/>
 <rect x="471" y="354" width="69" height="4" fill="#2a86b0"/>
 <g transform="translate(55 265) scale(0.16287)">
  <g id="wr">
   <path d="M335 92 C225 150 145 260 165 362 C180 445 240 505 300 530 L440 508 C335 462 270 402 258 332 C248 252 295 172 362 118 Z" fill="#94bf9f"/>
   <path d="M322 122 C242 195 200 290 218 378 C234 444 288 488 352 514" stroke="#e9f3eb" stroke-width="8" fill="none"/>
   <path d="M305 140 l38 12 M278 178 l40 8 M255 220 l40 5 M238 262 l40 3 M228 305 l40 0 M228 348 l40 -3 M236 392 l40 -8 M254 432 l38 -12 M280 468 l34 -16 M312 498 l30 -18" stroke="#5f9a6e" stroke-width="9" fill="none"/>
   <path d="M292 140 l-45 22 M262 188 l-50 16 M240 238 l-52 12 M226 288 l-52 6 M222 338 l-50 0 M230 388 l-48 -6 M248 432 l-42 -12 M275 470 l-35 -16" stroke="#6fa87e" stroke-width="9" fill="none"/>
  </g>
  <use href="#wr" transform="translate(1060 0) scale(-1 1)"/>
  <g id="bull">
   <path d="M418 135 C416 100 450 82 490 88 C505 80 518 70 528 62 L536 72 L534 108 C526 118 522 132 520 150 L518 198 L503 198 L500 165 L474 165 L470 198 L455 198 L452 162 C430 160 419 150 418 135 Z" fill="#7a3a1e"/>
   <path d="M525 70 l-8 -12 M530 68 l4 -14" stroke="#7a3a1e" stroke-width="5"/>
  </g>
  <use href="#bull" transform="translate(1072 -6) scale(-1 1)"/>
  <path d="M368 198 L692 198 L680 218 L680 400 C680 450 610 500 530 527 C450 500 380 450 380 400 L380 218 Z" fill="#2d8bbf"/>
  <path d="M400 214 L660 214 L660 400 C660 440 600 482 530 506 C460 482 400 440 400 400 Z" fill="#fff"/>
  <path d="M412 222 L648 222 L648 400 C648 435 595 472 530 494 C465 472 412 435 412 400 Z" fill="#c8232b"/>
  <circle cx="525" cy="232" r="22" fill="#f7a21b"/>
  <path d="M412 300 C450 268 500 285 530 295 C570 275 615 268 648 300 L648 340 L412 340 Z" fill="#3e8e4a"/>
  <rect x="412" y="318" width="236" height="22" fill="#4fa3d8"/>
  <path d="M425 330 C470 268 590 268 635 330" stroke="#fff" stroke-width="6" fill="none"/>
  <path d="M412 344 H648 M530 344 V494" stroke="#fff" stroke-width="6"/>
  <path d="M448 372 L492 425 M492 372 L448 425" stroke="#ddd" stroke-width="6"/>
  <ellipse cx="585" cy="392" rx="20" ry="28" fill="#f5c42a"/>
  <ellipse cx="612" cy="402" rx="13" ry="20" fill="#f0a020"/>
  <path d="M548 362 V470" stroke="#2f5a2f" stroke-width="5" stroke-dasharray="8 6"/>
  <path d="M225 562 C400 522 640 527 800 562 L792 626 C640 600 400 602 236 642 Z" fill="#fff" stroke="#777" stroke-width="4"/>
  <text x="272" y="598" font-family="Liberation Sans" font-weight="bold" font-size="21" fill="#333" textLength="460" transform="rotate(-1 500 590)">VALLE HERMOSO TURÍSTICO Y PRODUCTIVO</text>
  <path d="M40 602 C60 568 125 572 180 592 L292 640 L282 692 C230 702 170 702 130 682 C90 662 50 632 40 602 Z" fill="#1d6b2a"/>
  <path d="M60 598 C85 565 135 585 112 625" stroke="#0f4a1a" stroke-width="5" fill="none"/>
  <path d="M745 652 L800 600 C850 580 920 572 962 602 C972 642 932 682 872 702 L760 672 Z" fill="#f5cd2a" stroke="#c09010" stroke-width="4"/>
  <path d="M900 585 C940 575 975 610 935 640" stroke="#c09010" stroke-width="4" fill="none"/>
  <path d="M345 692 L460 642 L530 672 L600 642 L692 692 L600 712 L530 692 L460 712 Z" fill="#c8232b"/>
  <path d="M425 612 l30 25 M635 612 l-30 25 M480 612 l15 30 M580 612 l-15 30" stroke="#3e8e4a" stroke-width="9"/>
  <circle cx="450" cy="632" r="20" fill="#f5cd2a"/>
  <circle cx="610" cy="632" r="20" fill="#f5cd2a"/>
  <circle cx="530" cy="672" r="42" fill="#f5cd2a"/>
  <circle cx="530" cy="672" r="14" fill="#d9a010"/>
  <circle cx="470" cy="615" r="9" fill="#f5cd2a"/>
  <circle cx="565" cy="612" r="9" fill="#f5cd2a"/>
  <path d="M350 690 l40 -10 l-10 25 z M690 690 l-40 -10 l10 25 z" fill="#f5cd2a"/>
 </g>
</svg>
<div class="t" style="left:211.5px;top:305px;font-size:19.8px;font-weight:bold;color:#1f7ea8;-webkit-text-stroke:1px #1f7ea8;transform-origin:0 0;transform:scaleX(1.08)">GAD</div>
<div class="t" style="left:211.5px;top:323.5px;font-size:19.2px;font-weight:bold;color:#1f7ea8;-webkit-text-stroke:1px #1f7ea8;transform-origin:0 0;transform:scaleX(1.02)">PARROQUIAL</div>
<div class="t" style="left:211.5px;top:342.5px;font-size:30px;font-weight:bold;color:#f7c52b;-webkit-text-stroke:1.4px #f7c52b;transform-origin:0 0;transform:scaleX(0.99)">VALLE</div>
<div class="t" style="left:315.5px;top:342.5px;font-size:30px;font-weight:bold;color:#1d5e2e;-webkit-text-stroke:1.4px #1d5e2e;transform-origin:0 0;transform:scaleX(0.955)">HERMOSO</div>

<div class="t" style="left:540.0px;top:313.47px;font-size:11.50px;font-weight:bold;text-align:center;width:539px;transform:scaleX(1.065);transform-origin:50% 0;-webkit-text-stroke:0.25px #000;">REGISTRO DE FACTURAS DE COMPRA Y RETENCIONES A PROVEEDORES DE JULIO</div>
<div class="t" style="left:540.0px;top:329.17px;font-size:11.50px;font-weight:bold;text-align:center;width:539px;transform:scaleX(1.080);transform-origin:50% 0;-webkit-text-stroke:0.25px #000;">2024</div>
<div class="t" style="left:1079.0px;top:313.48px;font-size:10.30px;font-weight:bold;text-align:center;width:82px;transform:scaleX(1.090);transform-origin:50% 0;-webkit-text-stroke:0.25px #000;">Botellas</div>
<div class="t" style="left:1079.0px;top:329.58px;font-size:10.30px;font-weight:bold;text-align:center;width:82px;transform:scaleX(1.090);transform-origin:50% 0;-webkit-text-stroke:0.25px #000;">plásticas 1%</div>
<div class="t" style="left:1161.0px;top:265.58px;font-size:10.30px;font-weight:bold;text-align:center;width:75px;transform:scaleX(1.090);transform-origin:50% 0;-webkit-text-stroke:0.25px #000;">Actividades</div>
<div class="t" style="left:1161.0px;top:281.58px;font-size:10.30px;font-weight:bold;text-align:center;width:75px;transform:scaleX(1.090);transform-origin:50% 0;-webkit-text-stroke:0.25px #000;">de</div>
<div class="t" style="left:1161.0px;top:297.58px;font-size:10.30px;font-weight:bold;text-align:center;width:75px;transform:scaleX(1.090);transform-origin:50% 0;-webkit-text-stroke:0.25px #000;">construcció</div>
<div class="t" style="left:1161.0px;top:313.58px;font-size:10.30px;font-weight:bold;text-align:center;width:75px;transform:scaleX(1.090);transform-origin:50% 0;-webkit-text-stroke:0.25px #000;">n de obra</div>
<div class="t" style="left:1161.0px;top:329.58px;font-size:10.30px;font-weight:bold;text-align:center;width:75px;transform:scaleX(1.090);transform-origin:50% 0;-webkit-text-stroke:0.25px #000;">materias,</div>
<div class="t" style="left:1161.0px;top:345.58px;font-size:10.30px;font-weight:bold;text-align:center;width:75px;transform:scaleX(1.090);transform-origin:50% 0;-webkit-text-stroke:0.25px #000;">inmueble</div>
<div class="t" style="left:1161.0px;top:361.58px;font-size:10.30px;font-weight:bold;text-align:center;width:75px;transform:scaleX(1.090);transform-origin:50% 0;-webkit-text-stroke:0.25px #000;">urbanizació</div>
<div class="t" style="left:1161.0px;top:377.58px;font-size:10.30px;font-weight:bold;text-align:center;width:75px;transform:scaleX(1.090);transform-origin:50% 0;-webkit-text-stroke:0.25px #000;">n 1,75%</div>
<div class="t" style="left:1236.0px;top:297.58px;font-size:10.30px;font-weight:bold;text-align:center;width:52px;transform:scaleX(1.090);transform-origin:50% 0;-webkit-text-stroke:0.25px #000;">Cuando</div>
<div class="t" style="left:1236.0px;top:313.58px;font-size:10.30px;font-weight:bold;text-align:center;width:52px;transform:scaleX(1.090);transform-origin:50% 0;-webkit-text-stroke:0.25px #000;">no hay</div>
<div class="t" style="left:1236.0px;top:329.58px;font-size:10.30px;font-weight:bold;text-align:center;width:52px;transform:scaleX(1.090);transform-origin:50% 0;-webkit-text-stroke:0.25px #000;">retenció</div>
<div class="t" style="left:1236.0px;top:345.58px;font-size:10.30px;font-weight:bold;text-align:center;width:52px;transform:scaleX(1.090);transform-origin:50% 0;-webkit-text-stroke:0.25px #000;">n</div>
<div class="t" style="left:1288.0px;top:273.08px;font-size:10.30px;font-weight:bold;text-align:center;width:45px;transform:scaleX(1.090);transform-origin:50% 0;-webkit-text-stroke:0.25px #000;">100 %</div>
<div class="t" style="left:1288.0px;top:289.08px;font-size:10.30px;font-weight:bold;text-align:center;width:45px;transform:scaleX(1.090);transform-origin:50% 0;-webkit-text-stroke:0.25px #000;">y 1%.-</div>
<div class="t" style="left:1288.0px;top:305.08px;font-size:10.30px;font-weight:bold;text-align:center;width:45px;transform:scaleX(1.090);transform-origin:50% 0;-webkit-text-stroke:0.25px #000;">Regim</div>
<div class="t" style="left:1288.0px;top:321.08px;font-size:10.30px;font-weight:bold;text-align:center;width:45px;transform:scaleX(1.090);transform-origin:50% 0;-webkit-text-stroke:0.25px #000;">en</div>
<div class="t" style="left:1288.0px;top:337.08px;font-size:10.30px;font-weight:bold;text-align:center;width:45px;transform:scaleX(1.090);transform-origin:50% 0;-webkit-text-stroke:0.25px #000;">micro</div>
<div class="t" style="left:1288.0px;top:353.08px;font-size:10.30px;font-weight:bold;text-align:center;width:45px;transform:scaleX(1.090);transform-origin:50% 0;-webkit-text-stroke:0.25px #000;">mpres</div>
<div class="t" style="left:1288.0px;top:369.08px;font-size:10.30px;font-weight:bold;text-align:center;width:45px;transform:scaleX(1.090);transform-origin:50% 0;-webkit-text-stroke:0.25px #000;">a</div>
<div class="t" style="left:808.0px;top:401.71px;font-size:11.80px;font-weight:bold;text-align:center;width:193px;transform:scaleX(1.030);transform-origin:50% 0;-webkit-text-stroke:0.25px #000;">TOTAL 332</div>
<div class="t" style="left:1001.0px;top:402.51px;font-size:11.80px;font-weight:bold;text-align:center;width:78px;transform:scaleX(1.030);transform-origin:50% 0;-webkit-text-stroke:0.25px #000;">#¡REF!</div>
<div class="t" style="left:1079.0px;top:402.91px;font-size:11.80px;font-weight:bold;text-align:center;width:82px;transform:scaleX(1.100);transform-origin:50% 0;-webkit-text-stroke:0.25px #000;">343C</div>
<div class="t" style="left:1161.0px;top:402.91px;font-size:11.80px;font-weight:bold;text-align:center;width:75px;transform:scaleX(1.100);transform-origin:50% 0;-webkit-text-stroke:0.25px #000;">343B</div>
<div class="t" style="left:1236.0px;top:402.91px;font-size:11.80px;font-weight:bold;text-align:center;width:52px;transform:scaleX(1.100);transform-origin:50% 0;-webkit-text-stroke:0.25px #000;">332</div>
<div class="t" style="left:1288.0px;top:402.91px;font-size:11.80px;font-weight:bold;text-align:center;width:45px;transform:scaleX(1.100);transform-origin:50% 0;-webkit-text-stroke:0.25px #000;">343</div>
<div class="t" style="left:25.0px;top:444.67px;font-size:9.60px;font-weight:bold;text-align:center;width:75px;transform:scaleX(1.040);transform-origin:50% 0;-webkit-text-stroke:0.25px #000;">FECHA</div>
<div class="t" style="left:100.0px;top:444.67px;font-size:9.60px;font-weight:bold;text-align:center;width:125px;transform:scaleX(1.080);transform-origin:50% 0;-webkit-text-stroke:0.25px #000;">Nº DE C OMPROBANTE</div>
<div class="t" style="left:225.0px;top:438.37px;font-size:9.60px;font-weight:bold;text-align:center;width:98px;transform:scaleX(1.040);transform-origin:50% 0;-webkit-text-stroke:0.25px #000;">Nº RUC</div>
<div class="t" style="left:225.0px;top:453.37px;font-size:9.60px;font-weight:bold;text-align:center;width:98px;transform:scaleX(1.040);transform-origin:50% 0;-webkit-text-stroke:0.25px #000;">PROVEEDOR</div>
<div class="t" style="left:323.0px;top:438.37px;font-size:9.60px;font-weight:bold;text-align:center;width:69px;transform:scaleX(1.040);transform-origin:50% 0;-webkit-text-stroke:0.25px #000;">TIPO</div>
<div class="t" style="left:323.0px;top:453.37px;font-size:9.60px;font-weight:bold;text-align:center;width:69px;transform:scaleX(1.040);transform-origin:50% 0;-webkit-text-stroke:0.25px #000;">COMPROB.</div>
<div class="t" style="left:392.0px;top:444.67px;font-size:9.60px;font-weight:bold;text-align:center;width:148px;transform:scaleX(1.040);transform-origin:50% 0;-webkit-text-stroke:0.25px #000;">AUTORIZACIÓN</div>
<div class="t" style="left:540.0px;top:444.67px;font-size:9.60px;font-weight:bold;text-align:center;width:130px;transform:scaleX(1.040);transform-origin:50% 0;-webkit-text-stroke:0.25px #000;">PROVEEDOR</div>
<div class="t" style="left:670.0px;top:444.87px;font-size:9.60px;font-weight:bold;text-align:center;width:69px;transform:scaleX(1.040);transform-origin:50% 0;-webkit-text-stroke:0.25px #000;">BASE 15%</div>
<div class="t" style="left:739.0px;top:444.87px;font-size:9.60px;font-weight:bold;text-align:center;width:69px;transform:scaleX(1.040);transform-origin:50% 0;-webkit-text-stroke:0.25px #000;">BASE 5%</div>
<div class="t" style="left:808.0px;top:444.87px;font-size:9.60px;font-weight:bold;text-align:center;width:66px;transform:scaleX(1.040);transform-origin:50% 0;-webkit-text-stroke:0.25px #000;">BASE 0%</div>
<div class="t" style="left:874.0px;top:444.87px;font-size:9.60px;font-weight:bold;text-align:center;width:66px;transform:scaleX(1.040);transform-origin:50% 0;-webkit-text-stroke:0.25px #000;">IVA 5%</div>
<div class="t" style="left:940.0px;top:444.87px;font-size:9.60px;font-weight:bold;text-align:center;width:61px;transform:scaleX(1.040);transform-origin:50% 0;-webkit-text-stroke:0.25px #000;">IVA 15%</div>
<div class="t" style="left:1001.0px;top:436.27px;font-size:9.60px;font-weight:bold;text-align:center;width:78px;transform:scaleX(1.040);transform-origin:50% 0;-webkit-text-stroke:0.25px #000;">SUBTO-TAL</div>
<div class="t" style="left:1001.0px;top:468.87px;font-size:9.60px;font-weight:bold;text-align:center;width:78px;-webkit-text-stroke:0.25px #000;">3 3 2</div>
<div class="t" style="left:1079.0px;top:444.87px;font-size:9.60px;font-weight:bold;text-align:center;width:82px;transform:scaleX(1.040);transform-origin:50% 0;-webkit-text-stroke:0.25px #000;">TOTAL</div>
<div class="t" style="left:1161.0px;top:436.87px;font-size:9.60px;font-weight:bold;text-align:center;width:75px;transform:scaleX(1.040);transform-origin:50% 0;-webkit-text-stroke:0.25px #000;">Nº</div>
<div class="t" style="left:1161.0px;top:452.87px;font-size:9.60px;font-weight:bold;text-align:center;width:75px;transform:scaleX(1.040);transform-origin:50% 0;-webkit-text-stroke:0.25px #000;">RETENCION</div>
<div class="a" style="left:1237px;top:420px;width:96px;height:40px;overflow:hidden">
<div class="t" style="left:36.6px;top:15.87px;font-size:9.60px;font-weight:bold;transform:scaleX(1.040);transform-origin:0 0;-webkit-text-stroke:0.25px #000;">RETENCION I</div>
</div>
<div class="t" style="left:1236.0px;top:468.87px;font-size:9.60px;font-weight:bold;text-align:right;width:49px;transform:scaleX(1.100);transform-origin:100% 0;-webkit-text-stroke:0.25px #000;">10%</div>
<div class="t" style="left:1288.0px;top:468.87px;font-size:9.60px;font-weight:bold;text-align:right;width:43px;-webkit-text-stroke:0.25px #000;">7 0%</div>
<div class="t" style="left:25.0px;top:501.69px;font-size:11.00px;text-align:right;width:73px;transform:scaleX(1.200);transform-origin:100% 0;">1/7/2024</div>
<div class="t" style="left:103.5px;top:501.69px;font-size:11.00px;transform:scaleX(1.080);transform-origin:0 0;">001</div>
<div class="t" style="left:131.0px;top:501.69px;font-size:11.00px;transform:scaleX(1.100);transform-origin:0 0;">100</div>
<div class="t" style="left:159.6px;top:501.69px;font-size:11.00px;transform:scaleX(1.130);transform-origin:0 0;">000000132</div>
<div class="t" style="left:228.0px;top:501.69px;font-size:11.00px;transform:scaleX(1.130);transform-origin:0 0;">1720652450001</div>
<div class="t" style="left:325.8px;top:501.69px;font-size:11.00px;transform:scaleX(0.900);transform-origin:0 0;">FACT. ELEC.</div>
<div class="t" style="left:396.0px;top:485.89px;font-size:11.00px;transform:scaleX(1.130);transform-origin:0 0;">01072024011720652450</div>
<div class="t" style="left:396.0px;top:501.89px;font-size:11.00px;transform:scaleX(1.130);transform-origin:0 0;">00120011000000001321</div>
<div class="t" style="left:396.0px;top:517.89px;font-size:11.00px;transform:scaleX(1.130);transform-origin:0 0;">234567818</div>
<div class="t" style="left:543.7px;top:485.89px;font-size:11.00px;transform:scaleX(0.930);transform-origin:0 0;">BARRAGAN TOAPANTA</div>
<div class="t" style="left:543.7px;top:501.89px;font-size:11.00px;transform:scaleX(0.930);transform-origin:0 0;">JAVIER EDUARDO</div>
<div class="t" style="left:670.0px;top:501.69px;font-size:11.00px;text-align:center;width:69px;transform:scaleX(1.090);transform-origin:50% 0;">0.00</div>
<div class="t" style="left:739.0px;top:501.69px;font-size:11.00px;text-align:center;width:69px;transform:scaleX(1.090);transform-origin:50% 0;">0.00</div>
<div class="t" style="left:808.0px;top:501.69px;font-size:11.00px;text-align:center;width:66px;transform:scaleX(1.090);transform-origin:50% 0;">1200.00</div>
<div class="t" style="left:874.0px;top:501.69px;font-size:11.00px;text-align:center;width:66px;transform:scaleX(1.090);transform-origin:50% 0;">0.00</div>
<div class="t" style="left:940.0px;top:501.69px;font-size:11.00px;text-align:center;width:61px;transform:scaleX(1.090);transform-origin:50% 0;">0.00</div>
<div class="t" style="left:1001.0px;top:501.69px;font-size:11.00px;text-align:center;width:78px;transform:scaleX(1.090);transform-origin:50% 0;">1200.00</div>
<div class="t" style="left:1079.0px;top:501.69px;font-size:11.00px;text-align:center;width:82px;transform:scaleX(1.090);transform-origin:50% 0;">1200.00</div>
<div class="t" style="left:25.0px;top:549.69px;font-size:11.00px;text-align:right;width:73px;transform:scaleX(1.200);transform-origin:100% 0;">2/7/2024</div>
<div class="t" style="left:103.5px;top:549.69px;font-size:11.00px;transform:scaleX(1.080);transform-origin:0 0;">002</div>
<div class="t" style="left:131.0px;top:549.69px;font-size:11.00px;transform:scaleX(1.100);transform-origin:0 0;">901</div>
<div class="t" style="left:159.6px;top:549.69px;font-size:11.00px;transform:scaleX(1.130);transform-origin:0 0;">000006164</div>
<div class="t" style="left:228.0px;top:549.69px;font-size:11.00px;transform:scaleX(1.130);transform-origin:0 0;">1712182136001</div>
<div class="t" style="left:325.8px;top:549.69px;font-size:11.00px;transform:scaleX(0.900);transform-origin:0 0;">FACT. ELEC.</div>
<div class="t" style="left:396.0px;top:533.89px;font-size:11.00px;transform:scaleX(1.130);transform-origin:0 0;">02072024011712182136</div>
<div class="t" style="left:396.0px;top:549.89px;font-size:11.00px;transform:scaleX(1.130);transform-origin:0 0;">00120029010000061641</div>
<div class="t" style="left:396.0px;top:565.89px;font-size:11.00px;transform:scaleX(1.130);transform-origin:0 0;">234567813</div>
<div class="t" style="left:543.7px;top:533.89px;font-size:11.00px;transform:scaleX(0.930);transform-origin:0 0;">VILLARREAL CEDENO</div>
<div class="t" style="left:543.7px;top:549.89px;font-size:11.00px;transform:scaleX(0.930);transform-origin:0 0;">MARIA ALEXANDRA</div>
<div class="t" style="left:670.0px;top:549.69px;font-size:11.00px;text-align:center;width:69px;transform:scaleX(1.090);transform-origin:50% 0;">618.26</div>
<div class="t" style="left:739.0px;top:549.69px;font-size:11.00px;text-align:center;width:69px;transform:scaleX(1.090);transform-origin:50% 0;">0.00</div>
<div class="t" style="left:808.0px;top:549.69px;font-size:11.00px;text-align:center;width:66px;transform:scaleX(1.090);transform-origin:50% 0;">0.00</div>
<div class="t" style="left:874.0px;top:549.69px;font-size:11.00px;text-align:center;width:66px;transform:scaleX(1.090);transform-origin:50% 0;">0.00</div>
<div class="t" style="left:940.0px;top:549.69px;font-size:11.00px;text-align:center;width:61px;transform:scaleX(1.090);transform-origin:50% 0;">92.74</div>
<div class="t" style="left:1001.0px;top:549.69px;font-size:11.00px;text-align:center;width:78px;transform:scaleX(1.090);transform-origin:50% 0;">618.26</div>
<div class="t" style="left:1079.0px;top:549.69px;font-size:11.00px;text-align:center;width:82px;transform:scaleX(1.090);transform-origin:50% 0;">711.00</div>
<div class="t" style="left:25.0px;top:597.69px;font-size:11.00px;text-align:right;width:73px;transform:scaleX(1.200);transform-origin:100% 0;">2/7/2024</div>
<div class="t" style="left:103.5px;top:597.69px;font-size:11.00px;transform:scaleX(1.080);transform-origin:0 0;">001</div>
<div class="t" style="left:131.0px;top:597.69px;font-size:11.00px;transform:scaleX(1.100);transform-origin:0 0;">062</div>
<div class="t" style="left:159.6px;top:597.69px;font-size:11.00px;transform:scaleX(1.130);transform-origin:0 0;">000074109</div>
<div class="t" style="left:228.0px;top:597.69px;font-size:11.00px;transform:scaleX(1.130);transform-origin:0 0;">1760002600001</div>
<div class="t" style="left:325.8px;top:597.69px;font-size:11.00px;transform:scaleX(0.900);transform-origin:0 0;">FACT. ELEC.</div>
<div class="t" style="left:396.0px;top:581.89px;font-size:11.00px;transform:scaleX(1.130);transform-origin:0 0;">02072024011760002600</div>
<div class="t" style="left:396.0px;top:597.89px;font-size:11.00px;transform:scaleX(1.130);transform-origin:0 0;">00120010620000741091</div>
<div class="t" style="left:396.0px;top:613.89px;font-size:11.00px;transform:scaleX(1.130);transform-origin:0 0;">234567812</div>
<div class="t" style="left:543.7px;top:581.89px;font-size:11.00px;transform:scaleX(0.930);transform-origin:0 0;">BANCO CENTRAL DEL</div>
<div class="t" style="left:543.7px;top:597.89px;font-size:11.00px;transform:scaleX(0.930);transform-origin:0 0;">ECUADOR</div>
<div class="t" style="left:670.0px;top:597.69px;font-size:11.00px;text-align:center;width:69px;transform:scaleX(1.090);transform-origin:50% 0;">0.00</div>
<div class="t" style="left:739.0px;top:597.69px;font-size:11.00px;text-align:center;width:69px;transform:scaleX(1.090);transform-origin:50% 0;">0.00</div>
<div class="t" style="left:808.0px;top:597.69px;font-size:11.00px;text-align:center;width:66px;transform:scaleX(1.090);transform-origin:50% 0;">0.25</div>
<div class="t" style="left:874.0px;top:597.69px;font-size:11.00px;text-align:center;width:66px;transform:scaleX(1.090);transform-origin:50% 0;">0.00</div>
<div class="t" style="left:940.0px;top:597.69px;font-size:11.00px;text-align:center;width:61px;transform:scaleX(1.090);transform-origin:50% 0;">0.00</div>
<div class="t" style="left:1001.0px;top:597.69px;font-size:11.00px;text-align:center;width:78px;transform:scaleX(1.090);transform-origin:50% 0;">0.25</div>
<div class="t" style="left:1079.0px;top:597.69px;font-size:11.00px;text-align:center;width:82px;transform:scaleX(1.090);transform-origin:50% 0;">0.25</div>
<div class="t" style="left:1161.0px;top:597.69px;font-size:11.00px;text-align:center;width:75px;transform:scaleX(0.900);transform-origin:50% 0;">SIN RET.</div>
<div class="t" style="left:25.0px;top:645.69px;font-size:11.00px;text-align:right;width:73px;transform:scaleX(1.200);transform-origin:100% 0;">3/7/2024</div>
<div class="t" style="left:103.5px;top:645.69px;font-size:11.00px;transform:scaleX(1.080);transform-origin:0 0;">001</div>
<div class="t" style="left:131.0px;top:645.69px;font-size:11.00px;transform:scaleX(1.100);transform-origin:0 0;">100</div>
<div class="t" style="left:159.6px;top:645.69px;font-size:11.00px;transform:scaleX(1.130);transform-origin:0 0;">000000041</div>
<div class="t" style="left:228.0px;top:645.69px;font-size:11.00px;transform:scaleX(1.130);transform-origin:0 0;">2300154289001</div>
<div class="t" style="left:325.8px;top:645.69px;font-size:11.00px;transform:scaleX(0.900);transform-origin:0 0;">FACT. ELEC.</div>
<div class="t" style="left:396.0px;top:629.89px;font-size:11.00px;transform:scaleX(1.130);transform-origin:0 0;">03072024012300154289</div>
<div class="t" style="left:396.0px;top:645.89px;font-size:11.00px;transform:scaleX(1.130);transform-origin:0 0;">00120011000000000414</div>
<div class="t" style="left:396.0px;top:661.89px;font-size:11.00px;transform:scaleX(1.130);transform-origin:0 0;">304875918</div>
<div class="t" style="left:543.7px;top:629.89px;font-size:11.00px;transform:scaleX(0.930);transform-origin:0 0;">SARITAMA LALANGUI</div>
<div class="t" style="left:543.7px;top:645.89px;font-size:11.00px;transform:scaleX(0.930);transform-origin:0 0;">FREDDY PAUL</div>
<div class="t" style="left:670.0px;top:645.69px;font-size:11.00px;text-align:center;width:69px;transform:scaleX(1.090);transform-origin:50% 0;">1600.00</div>
<div class="t" style="left:739.0px;top:645.69px;font-size:11.00px;text-align:center;width:69px;transform:scaleX(1.090);transform-origin:50% 0;">0.00</div>
<div class="t" style="left:808.0px;top:645.69px;font-size:11.00px;text-align:center;width:66px;transform:scaleX(1.090);transform-origin:50% 0;">0.00</div>
<div class="t" style="left:874.0px;top:645.69px;font-size:11.00px;text-align:center;width:66px;transform:scaleX(1.090);transform-origin:50% 0;">0.00</div>
<div class="t" style="left:940.0px;top:645.69px;font-size:11.00px;text-align:center;width:61px;transform:scaleX(1.090);transform-origin:50% 0;">240.00</div>
<div class="t" style="left:1001.0px;top:645.69px;font-size:11.00px;text-align:center;width:78px;transform:scaleX(1.090);transform-origin:50% 0;">1600.00</div>
<div class="t" style="left:1079.0px;top:645.69px;font-size:11.00px;text-align:center;width:82px;transform:scaleX(1.090);transform-origin:50% 0;">1840.00</div>
<div class="a" style="left:523px;top:342px;width:17px;height:17px;background:#f3f5f9;border:1px solid #a0a0a0"></div>
<svg style="left:528px;top:349px" width="8" height="5"><path d="M0 0h7.5L3.75 4z" fill="#555"/></svg>
<div class="a" style="left:1062px;top:342px;width:17px;height:17px;background:#f3f5f9;border:1px solid #a0a0a0"></div>
<svg style="left:1067px;top:349px" width="8" height="5"><path d="M0 0h7.5L3.75 4z" fill="#555"/></svg>
<div class="a" style="left:1144px;top:342px;width:17px;height:17px;background:#f3f5f9;border:1px solid #a0a0a0"></div>
<svg style="left:1149px;top:349px" width="8" height="5"><path d="M0 0h7.5L3.75 4z" fill="#555"/></svg>
<div class="a" style="left:1219px;top:342px;width:17px;height:17px;background:#f3f5f9;border:1px solid #a0a0a0"></div>
<svg style="left:1224px;top:349px" width="8" height="5"><path d="M0 0h7.5L3.75 4z" fill="#555"/></svg>
<div class="a" style="left:1271px;top:342px;width:17px;height:17px;background:#f3f5f9;border:1px solid #a0a0a0"></div>
<svg style="left:1276px;top:349px" width="8" height="5"><path d="M0 0h7.5L3.75 4z" fill="#555"/></svg>
<div class="a" style="left:1316px;top:342px;width:17px;height:17px;background:#f3f5f9;border:1px solid #a0a0a0"></div>
<svg style="left:1321px;top:349px" width="8" height="5"><path d="M0 0h7.5L3.75 4z" fill="#555"/></svg>
<div class="a" style="left:471px;top:354px;width:69px;height:4px;background:#2a86b0"></div>
<!-- quick analysis -->
<div class="a" style="left:1081px;top:658px;width:20px;height:20px;background:#fafafa;border:1px solid #c6c6c6"></div>
<svg style="left:0;top:0" width="1360" height="768">
 <rect x="1084" y="661.5" width="6" height="4" fill="#3c78e0"/>
 <rect x="1090.5" y="661.5" width="6" height="4" fill="#fff" stroke="#888" stroke-width="0.8"/>
 <rect x="1084.5" y="666" width="6" height="4" fill="#fff" stroke="#888" stroke-width="0.8"/>
 <path d="M1084 673.5h7" stroke="#888" stroke-width="0.8" stroke-dasharray="1 1"/>
 <path d="M1093 672.5h5M1095.5 670v5" stroke="#666" stroke-width="0.9"/>
</svg>
<!-- vertical scrollbar -->
<div class="a" style="left:1338px;top:237px;width:22px;height:441px;background:#e6e6e6;border-left:1px solid #c6c6c6"></div>
<div class="a" style="left:1342px;top:239px;width:15px;height:439px;background:#f0f0f0"></div>
<div class="a" style="left:1342px;top:239px;width:15px;height:15px;background:#fff;border:1px solid #999"></div>
<div class="a" style="left:1342px;top:255px;width:15px;height:92px;background:#fff;border:1px solid #999"></div>
<div class="a" style="left:1342px;top:663px;width:15px;height:15px;background:#fff;border:1px solid #999"></div>
<!-- SHEET TABS -->
<div class="a" style="left:0;top:678px;width:1360px;height:28px;background:#e6e6e6;border-top:1px solid #c6c6c6"></div>
<div class="a" style="left:485px;top:678px;width:92px;height:25px;background:#fff;border-left:1px solid #c6c6c6;border-right:1px solid #c6c6c6"></div>
<div class="a" style="left:485px;top:701px;width:92px;height:2px;background:#217346"></div>
<div class="a" style="left:100px;top:683px;width:1px;height:18px;background:#aaa"></div>
<div class="a" style="left:203px;top:683px;width:1px;height:18px;background:#aaa"></div>
<div class="a" style="left:295px;top:683px;width:1px;height:18px;background:#aaa"></div>
<div class="a" style="left:390px;top:683px;width:1px;height:18px;background:#aaa"></div>
<div class="t" style="left:113.4px;top:685.5px;font-size:12.4px;color:#444">MARZO 2024</div>
<div class="t" style="left:217px;top:685.5px;font-size:12.4px;color:#444">ABRIL 2024</div>
<div class="t" style="left:308px;top:685.5px;font-size:12.4px;color:#444">MAYO 2024</div>
<div class="t" style="left:403px;top:685.5px;font-size:12.4px;color:#444">JUNIO 2024</div>
<div class="t" style="left:497px;top:685.5px;font-size:12.4px;font-weight:bold;color:#1e6b3c">JULIO 2024</div>
<svg style="left:0;top:0" width="1360" height="768">
 <path d="M31 688v7l-4-3.5z" fill="#1e6b3c"/>
 <path d="M56 688v7l4-3.5z" fill="#c0c0c0"/>
 <circle cx="81.5" cy="694.5" r="1.3" fill="#1e6b3c"/><circle cx="86" cy="694.5" r="1.3" fill="#1e6b3c"/><circle cx="90.5" cy="694.5" r="1.3" fill="#1e6b3c"/>
 <circle cx="617.5" cy="691.5" r="7.5" fill="none" stroke="#777" stroke-width="1.3"/>
 <path d="M613.5 691.5h8M617.5 687.5v8" stroke="#777" stroke-width="1.3"/>
 <circle cx="729.5" cy="687" r="1" fill="#aaa"/><circle cx="729.5" cy="691.5" r="1" fill="#aaa"/><circle cx="729.5" cy="696" r="1" fill="#aaa"/>
</svg>
<!-- h scrollbar -->
<div class="a" style="left:747px;top:685px;width:589px;height:15px;background:#f0f0f0"></div>
<div class="a" style="left:747px;top:685px;width:14px;height:15px;background:#fff;border:1px solid #999"></div>
<div class="a" style="left:781px;top:685px;width:380px;height:15px;background:#fff;border:1px solid #999"></div>
<div class="a" style="left:1321px;top:685px;width:15px;height:15px;background:#fff;border:1px solid #999"></div>
<svg style="left:0;top:0" width="1360" height="768">
 <path d="M756 689v7l-4-3.5z" fill="#222"/>
 <path d="M1326 689v7l4-3.5z" fill="#222"/>
 <path d="M1346 249.5l3.5-4 3.5 4z" fill="#222"/>
 <path d="M1346 668l3.5 4 3.5-4z" fill="#222"/>
</svg>
<!-- STATUS BAR -->
<div class="a" style="left:0;top:706px;width:1360px;height:22px;background:#f3f3f3"></div>
<div class="t" style="left:11.3px;top:712.6px;font-size:10.8px;color:#444">Listo</div>
<div class="t" style="left:73.4px;top:712.6px;font-size:10.4px;font-weight:bold;color:#262626">Accesibilidad: es necesario investigar</div>
<svg style="left:0;top:0" width="1360" height="768">
 <path d="M58 712a6 6 0 1 0 6 8" fill="none" stroke="#666" stroke-width="1.1" stroke-dasharray="2 1"/>
 <path d="M62 710v5M60 713h4" stroke="#444" stroke-width="1"/>
 <path d="M63 717l6 6M69 717l-6 6" stroke="#444" stroke-width="1.6"/>
</svg>
<div class="a" style="left:1066px;top:706px;width:40px;height:21px;background:#c8c8c8"></div>
<svg style="left:0;top:0" width="1360" height="768">
 <g fill="none" stroke="#666" stroke-width="1">
 <rect x="1079.5" y="710.5" width="12" height="12"/>
 <path d="M1083.5 710.5v12M1087.5 710.5v12M1079.5 714.5h12M1079.5 718.5h12"/>
 <rect x="1119.5" y="710.5" width="13" height="12"/>
 <rect x="1122.5" y="712.5" width="7" height="8"/>
 <path d="M1124 715h4M1124 717h4"/>
 <path d="M1159.5 710.5h13v12h-13z M1159.5 716.5h6v-6 M1167.5 710.5v5h5"/>
 </g>
 <path d="M1192 717.5h8" stroke="#444" stroke-width="1"/>
 <path d="M1205 717.5h100" stroke="#444" stroke-width="1"/>
 <rect x="1250" y="712" width="6" height="11" fill="#444"/>
 <path d="M1310 717.5h8M1314.5 713v9" stroke="#444" stroke-width="1"/>
</svg>
<div class="t" style="left:1331.5px;top:712.2px;font-size:10.5px;color:#262626">95%</div>
<!-- TASKBAR -->
<div class="a" style="left:0;top:728px;width:1360px;height:40px;background:#101010"></div>
<div class="a" style="left:48px;top:728px;width:345px;height:40px;background:#f0f0f0;border-top:1px solid #d0d0d0"></div>
<svg style="left:0;top:0" width="1360" height="768">
 <path d="M16 741.5l7-1v7h-7zM24 740.3l8.5-1.2v8.4h-8.5zM16 748.5h7v7l-7-1zM24 748.5h8.5v8.4l-8.5-1.2z" fill="#fff"/>
 <circle cx="70" cy="746.5" r="5.5" fill="none" stroke="#222" stroke-width="1.3"/>
 <path d="M66 750.5l-5.5 5.5" stroke="#222" stroke-width="1.5"/>
</svg>
<div class="t" style="left:88px;top:741px;font-size:14.5px;color:#222">Escribe aquí para buscar</div>
<!-- tiger -->
<svg style="left:0;top:0" width="1360" height="768">
 <g transform="translate(300 726) scale(0.07353)">
  <path d="M170 571 C220 490 400 480 700 470 C900 440 1100 430 1250 440 L1250 571 Z" fill="#726b4b"/>
  <path d="M985 320 C1030 420 1100 430 1120 350" stroke="#f39a2a" stroke-width="32" fill="none"/>
  <circle cx="1075" cy="322" r="18" fill="#222"/>
  <path d="M470 230 C520 150 700 140 880 180 C960 200 1000 260 990 330 L1010 480 L960 505 L915 495 L930 405 C880 420 800 405 760 385 L760 500 L650 515 L690 392 C640 385 600 375 580 362 L570 505 L490 515 L520 385 L440 485 L330 505 L400 420 C440 360 460 300 470 230 Z" fill="#f39a2a"/>
  <ellipse cx="670" cy="330" rx="75" ry="55" fill="#fbf3e6"/>
  <path d="M290 110 L350 130 C380 80 420 50 450 70 C480 100 505 150 495 220 C485 290 445 325 380 325 C320 315 290 262 300 200 Z" fill="#f39a2a"/>
  <ellipse cx="395" cy="262" rx="52" ry="42" fill="#fbe6cc"/>
  <circle cx="340" cy="200" r="14" fill="#555"/><circle cx="430" cy="165" r="14" fill="#555"/>
  <path d="M540 160 l40 100 M600 150 l25 110 M660 150 l30 110 M730 160 l40 120 M790 170 l30 110 M850 180 l20 100 M880 300 l40 100 M420 350 l-20 60 M450 380 l-30 60" stroke="#222" stroke-width="22" fill="none"/>
 </g>
</svg>
<div class="a" style="left:493px;top:728px;width:48px;height:40px;background:#333"></div>
<div class="a" style="left:448px;top:765px;width:40px;height:3px;background:#76b9ed"></div>
<div class="a" style="left:493px;top:765px;width:48px;height:3px;background:#76b9ed"></div>
<div class="a" style="left:693px;top:765px;width:40px;height:3px;background:#76b9ed"></div>
<div class="a" style="left:742px;top:765px;width:40px;height:3px;background:#76b9ed"></div>
<svg style="left:0;top:0" width="1360" height="768">
 <!-- edge -->
 <circle cx="418.5" cy="747.5" r="12" fill="#1d8ad6"/>
 <path d="M408 741 c4-8 18-8 22 2 c1 4 -2 7 -8 7 c4-4 0-9 -5-9 c-4 0 -8 4 -8 9 c0 6 6 10 14 9 c-6 4 -14 2 -17 -4z" fill="#5fd16a"/>
 <path d="M410 750 c0 -6 4 -10 9 -10 c5 0 7 4 5 8 c-4 0 -8 2 -8 6 c0 3 2 6 6 7 c-7 0 -12 -5 -12 -11z" fill="#0f5fae"/>
 <!-- explorer -->
 <path d="M456 737h10l2 3h12v18h-24z" fill="#f4b93a"/>
 <rect x="456" y="741" width="24" height="17" fill="#ffd35a"/>
 <rect x="463" y="751" width="10" height="7" fill="#2f7dd3"/>
 <!-- excel -->
 <rect x="509" y="736" width="19" height="23" rx="2" fill="#1f9d55"/>
 <rect x="518" y="736" width="10" height="11" fill="#33c481"/>
 <rect x="518" y="747" width="10" height="12" fill="#107c41"/>
 <rect x="503" y="740" width="14" height="15" rx="1" fill="#185c37"/>
 <path d="M506.5 743.5l7 8M513.5 743.5l-7 8" stroke="#fff" stroke-width="1.8"/>
 <!-- firefox -->
 <circle cx="566" cy="748" r="11.5" fill="#ff7a1a"/>
 <circle cx="567" cy="749" r="7" fill="#7b3fe4"/>
 <path d="M556 742 c2-8 12-11 18-6 c-4-1 -8 0 -10 3z" fill="#ffcc33"/>
 <!-- chrome -->
 <circle cx="614.5" cy="747.5" r="12" fill="#e33b2e"/>
 <path d="M614.5 747.5 L604.1 753.5 A12 12 0 0 0 620.5 757.9z" fill="#1fa347"/>
 <path d="M614.5 747.5 L620.5 757.9 A12 12 0 0 0 626.5 747.5 L614.5 741.5z" fill="#ffcd40"/>
 <path d="M614.5 747.5 L604.1 753.5 A12 12 0 0 1 604.1 741.5 L614.5 741.5z" fill="#1fa347"/>
 <circle cx="614.5" cy="747.5" r="5.5" fill="#fff"/>
 <circle cx="614.5" cy="747.5" r="4.2" fill="#3b7ce9"/>
 <!-- word -->
 <rect x="657" y="737" width="18" height="22" rx="2" fill="#2b7cd3"/>
 <rect x="666" y="737" width="9" height="11" fill="#41a5ee"/>
 <rect x="651" y="741" width="14" height="14" rx="1" fill="#185abd"/>
 <text x="652.5" y="752.5" font-family="Liberation Sans" font-weight="bold" font-size="11" fill="#fff">W</text>
 <!-- chrome profile -->
 <circle cx="711" cy="746.5" r="11.5" fill="#e33b2e"/>
 <path d="M711 746.5 L701 752 A11.5 11.5 0 0 0 716.7 756.5z" fill="#1fa347"/>
 <path d="M711 746.5 L716.7 756.5 A11.5 11.5 0 0 0 722.5 746.5 L711 740.5z" fill="#ffcd40"/>
 <circle cx="711" cy="746.5" r="5" fill="#fff"/>
 <circle cx="711" cy="746.5" r="3.8" fill="#3b7ce9"/>
 <circle cx="719" cy="754.5" r="7" fill="#b5cfd6"/>
 <path d="M716 751l3 4 3-4M719 755v4" stroke="#333" stroke-width="1.2" fill="none"/>
 <!-- paint -->
 <ellipse cx="760" cy="749" rx="11" ry="9" fill="#dde7ee"/>
 <circle cx="754" cy="746" r="1.8" fill="#e33b2e"/>
 <circle cx="758" cy="742.5" r="1.8" fill="#3b7ce9"/>
 <circle cx="763" cy="742.5" r="1.8" fill="#1fa347"/>
 <circle cx="754" cy="751.5" r="1.8" fill="#ffcd40"/>
 <path d="M763 756 l9-18 2 1 -8 18z" fill="#c98a3a"/>
 <!-- tray -->
 <path d="M1117 751.5l6-6 6 6" fill="none" stroke="#fff" stroke-width="1.2"/>
 <rect x="1143.5" y="743.5" width="7" height="8" rx="1" fill="none" stroke="#fff" stroke-width="1.1"/>
 <path d="M1150.5 746l3-2v7l-3-2" fill="none" stroke="#fff" stroke-width="1.1"/>
 <path d="M1144 741.5a6 3 0 0 1 8 0M1144 754a6 3 0 0 0 8 0" fill="none" stroke="#fff" stroke-width="0.8"/>
 <rect x="1165.5" y="742.5" width="13" height="8" fill="none" stroke="#fff" stroke-width="1.1"/>
 <path d="M1172 750.5v4M1169 754.5h6M1163.5 743v12" stroke="#fff" stroke-width="1.1"/>
 <rect x="1163" y="742" width="4" height="4" fill="#fff"/>
 <path d="M1187.5 745.5h3l4-3.5v12l-4-3.5h-3z" fill="none" stroke="#fff" stroke-width="1.1"/>
 <path d="M1197 745a4 4 0 0 1 0 6M1199.5 743a7 7 0 0 1 0 10M1202 741a10 10 0 0 1 0 14" fill="none" stroke="#fff" stroke-width="0.9"/>
 <path d="M1319.5 740.5h15v11.5h-5l-2.5 3-2.5-3h-5z" fill="none" stroke="#fff" stroke-width="1.1"/>
 <path d="M1355.5 728v40" stroke="#555"/>
</svg>
<div class="t" style="left:1215.7px;top:742px;font-size:11.3px;color:#fff;transform:scaleX(0.8);transform-origin:0 0">ESP</div>
<div class="t" style="left:1261px;top:733px;font-size:11.5px;color:#fff">09:58</div>
<div class="t" style="left:1248.8px;top:750.5px;font-size:11.8px;color:#fff">29/7/2024</div>

</body></html>
